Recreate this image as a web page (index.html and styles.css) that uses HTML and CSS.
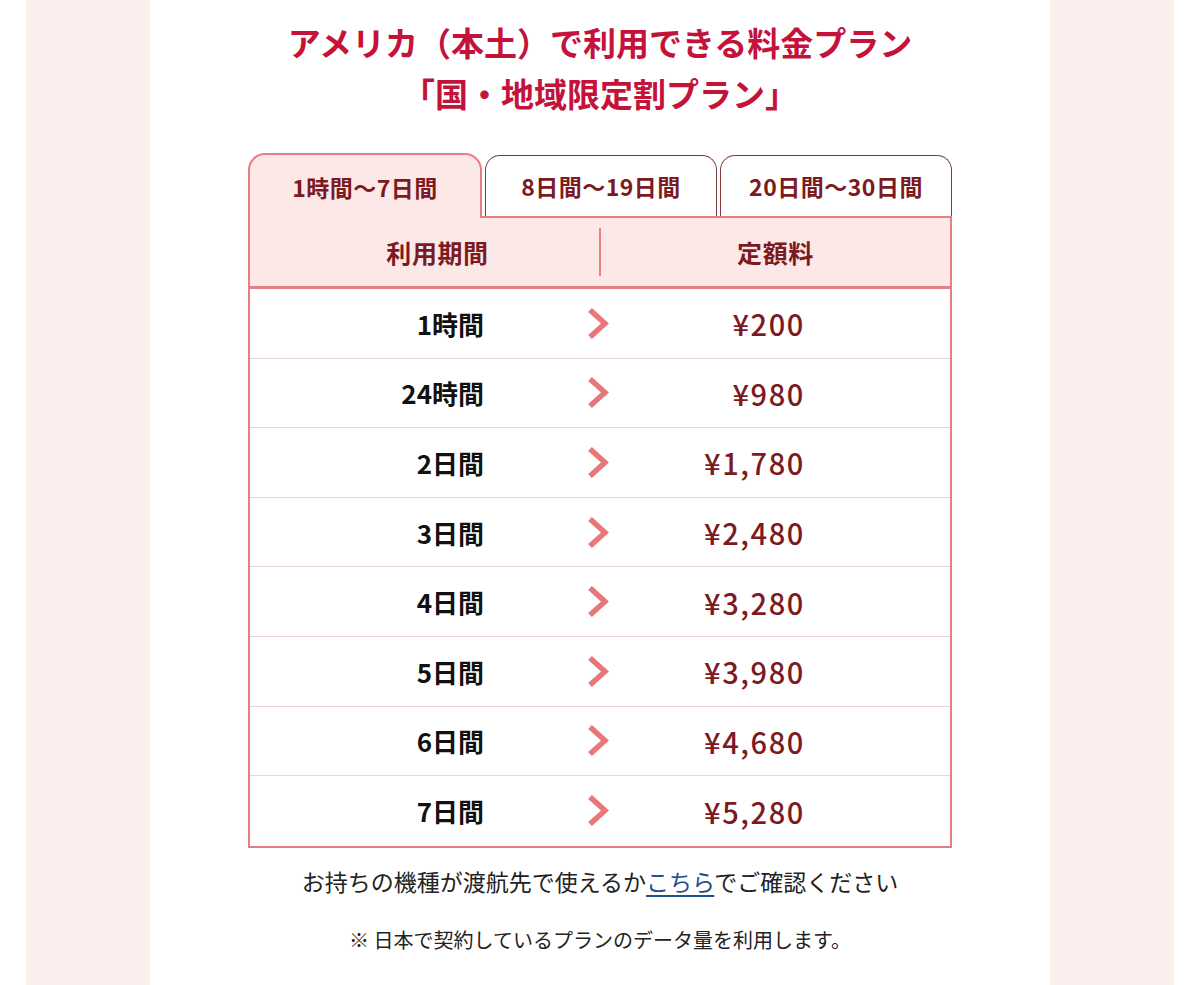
FILE: index.html
```html
<!DOCTYPE html>
<html lang="ja">
<head>
<meta charset="utf-8">
<title>料金プラン</title>
<link rel="stylesheet" href="styles.css">
</head>
<body>
<div class="page">
  <div class="content">
    <h1 class="title">アメリカ（本土）で利用できる料金プラン<br>「国・地域限定割プラン」</h1>

    <div class="plan">
      <div class="tabs">
        <div class="tab tab-active">1時間〜7日間</div>
        <div class="tab">8日間〜19日間</div>
        <div class="tab">20日間〜30日間</div>
      </div>
      <div class="table">
        <div class="thead">
          <div class="th th-left">利用期間</div>
          <div class="th-divider"></div>
          <div class="th th-right">定額料</div>
        </div>
        <div class="row"><div class="label">1時間</div><div class="chev"><svg viewBox="0 0 22 31" width="22" height="31"><polyline points="3,2 18,15.5 3,29" /></svg></div><div class="price">¥200</div></div>
        <div class="row"><div class="label">24時間</div><div class="chev"><svg viewBox="0 0 22 31" width="22" height="31"><polyline points="3,2 18,15.5 3,29" /></svg></div><div class="price">¥980</div></div>
        <div class="row"><div class="label">2日間</div><div class="chev"><svg viewBox="0 0 22 31" width="22" height="31"><polyline points="3,2 18,15.5 3,29" /></svg></div><div class="price">¥1,780</div></div>
        <div class="row"><div class="label">3日間</div><div class="chev"><svg viewBox="0 0 22 31" width="22" height="31"><polyline points="3,2 18,15.5 3,29" /></svg></div><div class="price">¥2,480</div></div>
        <div class="row"><div class="label">4日間</div><div class="chev"><svg viewBox="0 0 22 31" width="22" height="31"><polyline points="3,2 18,15.5 3,29" /></svg></div><div class="price">¥3,280</div></div>
        <div class="row"><div class="label">5日間</div><div class="chev"><svg viewBox="0 0 22 31" width="22" height="31"><polyline points="3,2 18,15.5 3,29" /></svg></div><div class="price">¥3,980</div></div>
        <div class="row"><div class="label">6日間</div><div class="chev"><svg viewBox="0 0 22 31" width="22" height="31"><polyline points="3,2 18,15.5 3,29" /></svg></div><div class="price">¥4,680</div></div>
        <div class="row"><div class="label">7日間</div><div class="chev"><svg viewBox="0 0 22 31" width="22" height="31"><polyline points="3,2 18,15.5 3,29" /></svg></div><div class="price">¥5,280</div></div>
      </div>
    </div>

    <p class="note">お持ちの機種が渡航先で使えるか<a href="#" class="link">こちら</a>でご確認ください</p>
    <p class="note-small">※ 日本で契約しているプランのデータ量を利用します。</p>
  </div>
</div>
</body>
</html>
```

FILE: styles.css
```css
* { box-sizing: border-box; }

html, body {
  margin: 0;
  padding: 0;
  background: #ffffff;
}

body {
  font-family: "Noto Sans CJK JP", "Noto Sans", sans-serif;
  color: #1a1a1a;
}

.page {
  margin: 0 26px;
  padding: 0 124px;
  background: #fdeeee;
  min-height: 985px;
}

.content {
  background: #ffffff;
  min-height: 985px;
  padding-top: 17px;
  display: flex;
  flex-direction: column;
  align-items: center;
}

.title {
  margin: 0;
  font-size: 33px;
  line-height: 51px;
  font-weight: 700;
  color: #c4123b;
  text-align: center;
}

.plan {
  width: 704px;
  margin-top: 34px;
}

.tabs {
  display: flex;
  align-items: flex-end;
  gap: 3px;
  margin-bottom: -2px;
}

.tab {
  flex: 1;
  height: 61px;
  margin-bottom: 2px;
  border: 1px solid #7d3a3a;
  border-bottom: none;
  border-radius: 15px 15px 0 0;
  background: #ffffff;
  color: #7c1a1f;
  font-size: 23px;
  font-weight: 700;
  display: flex;
  align-items: center;
  justify-content: center;
  padding-top: 0;
  letter-spacing: 0.5px;
}

.tab-active {
  position: relative;
  z-index: 1;
  height: 65px;
  margin-bottom: 0;
  border: 2px solid #e67f7f;
  border-bottom: none;
  background: #fde8e8;
  border-radius: 17px 17px 0 0;
  padding-top: 0;
}

.table {
  border: 2px solid #e67f7f;
}

.thead {
  height: 71px;
  background: #fde8e8;
  border-bottom: 3px solid #e67f7f;
  display: grid;
  grid-template-columns: 1fr 2px 1fr;
  align-items: center;
}

.th {
  font-size: 25px;
  font-weight: 700;
  color: #7c1a1f;
  text-align: center;
  letter-spacing: 0.6px;
}

.th-left { padding-left: 26px; }

.th-divider {
  width: 2px;
  height: 48px;
  background: #e67f7f;
}

.row {
  height: 69.6px;
  display: grid;
  grid-template-columns: 297px 100px 157px 1fr;
  align-items: center;
  border-bottom: 1px solid #e8d5d5;
}

.row:last-child { border-bottom: none; }

.label {
  text-align: right;
  padding-right: 63px;
  font-size: 26px;
  font-weight: 700;
  color: #111111;
}

.chev {
  display: flex;
  justify-content: center;
  padding-left: 1px;
}

.chev svg polyline {
  fill: none;
  stroke: #e87878;
  stroke-width: 5.5;
  stroke-linejoin: miter;
}

.price {
  text-align: right;
  font-size: 29px;
  font-weight: 500;
  color: #7c1a1f;
  letter-spacing: 1.6px;
  margin-right: -1px;
}

.note {
  margin: 16px 0 0;
  font-size: 23px;
  line-height: 34px;
  color: #222222;
}

.link {
  color: #1f4e8c;
  text-decoration: underline;
  text-underline-offset: 4px;
}

.note-small {
  margin: 28px 0 0;
  font-size: 20px;
  line-height: 28px;
  color: #222222;
}
```
